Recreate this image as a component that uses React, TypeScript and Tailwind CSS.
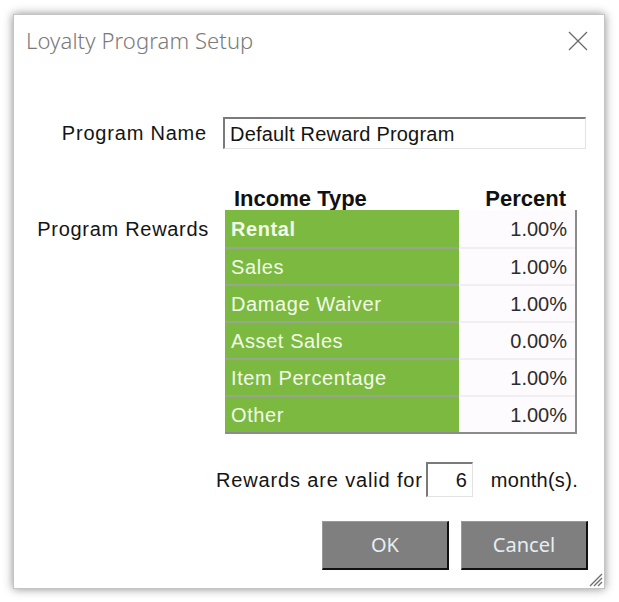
import React from "react";

type Reward = { type: string; percent: string; bold?: boolean };

const rewards: Reward[] = [
  { type: "Rental", percent: "1.00%", bold: true },
  { type: "Sales", percent: "1.00%" },
  { type: "Damage Waiver", percent: "1.00%" },
  { type: "Asset Sales", percent: "0.00%" },
  { type: "Item Percentage", percent: "1.00%" },
  { type: "Other", percent: "1.00%" },
];

const sans = "font-['Liberation_Sans',Arial,sans-serif]";

export default function App() {
  return (
    <div className="min-h-screen bg-white pl-[13px] pt-[14px]">
      <div className="relative flex h-[575px] w-[592px] flex-col border border-[#c4c4c4] bg-white shadow-[0_0_9px_rgba(0,0,0,0.45)]">
        {/* title bar */}
        <div className="flex h-[50px] items-center justify-between pl-[12px] pr-[16px]">
          <span className="font-['Noto_Sans',sans-serif] text-[22px] font-light tracking-[0.1px] text-[#7a7a7a]">
            Loyalty Program Setup
          </span>
          <svg width="20" height="20" viewBox="0 0 20 20" className="mt-[2px]">
            <path d="M1 1 L19 19 M19 1 L1 19" stroke="#6b6b6b" strokeWidth="1.3" fill="none" />
          </svg>
        </div>

        {/* program name */}
        <div className={`mt-[52px] flex h-[32px] items-center ${sans} text-[20px] text-[#141414]`}>
          <span className="w-[193px] text-right tracking-[0.8px]">Program Name</span>
          <div className="ml-[16px] flex h-full w-[363px] items-center border-l-2 border-t-2 border-b border-r border-l-[#7a7a7a] border-t-[#7a7a7a] border-b-[#e3e3e3] border-r-[#e3e3e3] pl-[5px] tracking-[0.2px]">
            Default Reward Program
          </div>
        </div>

        {/* rewards grid */}
        <div className={`mt-[36px] flex ${sans}`}>
          <div className="w-[195px] pt-[25px]">
            <div className="flex h-[37px] items-center justify-end text-[20px] tracking-[0.7px] text-[#141414]">
              Program Rewards
            </div>
          </div>
          <div className="ml-[16px] w-[352px]">
            <div className="flex h-[25px] items-end justify-between pl-[9px] pr-[11px] text-[22px] font-bold leading-none text-[#111]">
              <span>Income Type</span>
              <span>Percent</span>
            </div>
            <div className="border-b-2 border-r-2 border-b-[#8c8c8c] border-r-[#8c8c8c]">
              {rewards.map((r, i) => (
                <div key={r.type} className="flex h-[37px]">
                  <div
                    className={`flex w-[234px] items-center bg-[#7cb940] pl-[6px] text-[20px] tracking-[0.6px] text-[#f3fbe9] ${
                      i > 0 ? "border-t-2 border-t-[#9aa58f]" : ""
                    } ${r.bold ? "font-bold" : ""}`}
                  >
                    {r.type}
                  </div>
                  <div
                    className={`flex flex-1 items-center justify-end bg-[#fdfbfd] pr-[8px] text-[20px] text-[#2c2c2c] ${
                      i > 0 ? "border-t-2 border-t-[#f0eef0]" : ""
                    }`}
                  >
                    {r.percent}
                  </div>
                </div>
              ))}
            </div>
          </div>
        </div>

        {/* validity */}
        <div className={`mt-[28px] flex h-[35px] items-center ${sans} text-[20px] text-[#141414]`}>
          <span className="ml-[202px] tracking-[0.85px]">Rewards are valid for</span>
          <div className="ml-[3px] flex h-full w-[47px] items-center justify-end border-l-2 border-t-2 border-b border-r border-l-[#7a7a7a] border-t-[#7a7a7a] border-b-[#e3e3e3] border-r-[#e3e3e3] pr-[5px]">
            6
          </div>
          <span className="ml-[18px] tracking-[0.3px]">month(s).</span>
        </div>

        {/* buttons */}
        <div className="mt-[24px] flex justify-end gap-[12px] pr-[16px]">
          {["OK", "Cancel"].map((b) => (
            <button
              key={b}
              className="flex h-[49px] w-[127px] items-center justify-center border-b-2 border-l border-r-2 border-t border-b-[#111] border-l-[#9a9a9a] border-r-[#111] border-t-[#9a9a9a] bg-[#7f7f7f] font-['Noto_Sans',sans-serif] text-[20px] text-[#e6eef2]"
            >
              {b}
            </button>
          ))}
        </div>

        {/* resize grip */}
        <svg width="16" height="16" viewBox="0 0 16 16" className="absolute bottom-[1px] right-[1px]">
          <path d="M15 3 L3 15 M15 7 L7 15 M15 11 L11 15" stroke="#6f6f6f" strokeWidth="1.4" />
        </svg>
      </div>
    </div>
  );
}
